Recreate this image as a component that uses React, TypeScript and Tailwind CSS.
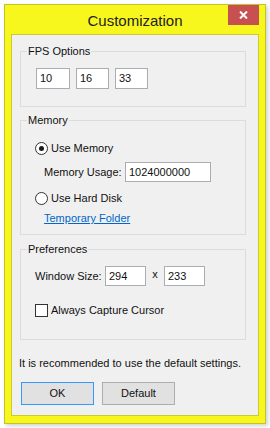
import type { ReactNode } from "react";

const font = { fontFamily: '"Liberation Sans", Arial, sans-serif' };

function GroupBox({ title, className, children }: { title: string; className: string; children: ReactNode }) {
  return (
    <fieldset className={`ml-[8px] w-[226px] border border-[#dcdcdc] ${className}`}>
      <legend className="ml-[6px] px-[1px] h-[15px] leading-[15px]">{title}</legend>
      {children}
    </fieldset>
  );
}

function TextBox({ value, className }: { value: string; className: string }) {
  return (
    <div className={`border border-[#abadb3] bg-white pl-[3px] flex items-center leading-[15px] ${className}`}>
      {value}
    </div>
  );
}

function Radio({ checked }: { checked?: boolean }) {
  return (
    <div className="w-[13px] h-[13px] rounded-full border border-[#333] bg-white flex items-center justify-center">
      {checked && <div className="w-[5px] h-[5px] rounded-full bg-[#1a1a1a]" />}
    </div>
  );
}

export default function App() {
  return (
    <div className="w-[270px] h-[428px] bg-white pt-[4px] pl-[4px] text-[11px] text-[#111] whitespace-nowrap" style={font}>
      {/* window frame */}
      <div className="w-[262px] h-[420px] border border-[#c2c22c] bg-[#f7f71e] shadow-[2px_2px_4px_rgba(0,0,0,0.18)] flex flex-col">
        {/* title bar */}
        <div className="h-[29px] grid grid-cols-[1fr_auto_1fr]">
          <div />
          <div className="self-center pt-[2px] text-[15px] leading-[20px] text-[#222]">Customization</div>
          <div className="justify-self-end mr-[6px] w-[31px] h-[20px] bg-[#c75050] flex items-center justify-center">
            <svg width="9" height="8" viewBox="0 0 9 8">
              <path d="M1 0.5 L8 7.5 M8 0.5 L1 7.5" stroke="white" strokeWidth="2" />
            </svg>
          </div>
        </div>

        {/* client area */}
        <div className="ml-[6px] w-[248px] h-[382px] border border-[#c9c93a] bg-[#f0f0f0]">
          <GroupBox title="FPS Options" className="mt-[9px] pb-[17px]">
            <div className="mt-[9px] ml-[15px] flex gap-[6px]">
              <TextBox value="10" className="w-[34px] h-[21px]" />
              <TextBox value="16" className="w-[33px] h-[21px]" />
              <TextBox value="33" className="w-[33px] h-[21px]" />
            </div>
          </GroupBox>

          <GroupBox title="Memory" className="mt-[6px] pb-[8px]">
            <div className="mt-[13px] ml-[14px] h-[15px] flex items-center gap-[3px]">
              <Radio checked />
              <span className="leading-[15px]">Use Memory</span>
            </div>
            <div className="mt-[6px] ml-[23px] flex items-center">
              <span className="w-[81px] leading-[15px]">Memory Usage:</span>
              <TextBox value="1024000000" className="w-[86px] h-[20px]" />
            </div>
            <div className="mt-[9px] ml-[14px] h-[15px] flex items-center gap-[3px]">
              <Radio />
              <span className="leading-[15px]">Use Hard Disk</span>
            </div>
            <div className="mt-[5px] ml-[23px] h-[15px] leading-[15px]">
              <span className="text-[#0066cc] underline">Temporary Folder</span>
            </div>
          </GroupBox>

          <GroupBox title="Preferences" className="mt-[7px] pb-[21px]">
            <div className="mt-[9px] ml-[14px] flex items-center">
              <span className="w-[70px] leading-[15px]">Window Size:</span>
              <TextBox value="294" className="w-[41px] h-[20px]" />
              <span className="w-[18px] self-start mt-[1px] text-center leading-[15px]">x</span>
              <TextBox value="233" className="w-[41px] h-[20px]" />
            </div>
            <div className="mt-[17px] ml-[14px] h-[15px] flex items-center gap-[3px]">
              <div className="w-[13px] h-[13px] border border-[#333] bg-white" />
              <span className="leading-[15px]">Always Capture Cursor</span>
            </div>
          </GroupBox>

          <p className="mt-[16px] ml-[7px] leading-[15px]">It is recommended to use the default settings.</p>

          <div className="mt-[11px] ml-[9px] flex gap-[8px]">
            <button className="w-[73px] h-[23px] border border-[#3399ff] bg-[#e1e1e1] leading-[15px]">OK</button>
            <button className="w-[73px] h-[23px] border border-[#adadad] bg-[#e1e1e1] leading-[15px]">Default</button>
          </div>
        </div>
      </div>
    </div>
  );
}
